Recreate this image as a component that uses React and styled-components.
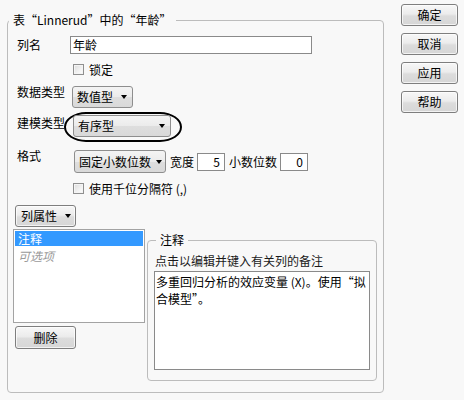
import React from "react";
import styled, { createGlobalStyle } from "styled-components";

const GlobalStyle = createGlobalStyle`
  html, body { margin: 0; padding: 0; background: #f8f8f8; }
  body {
    font-family: "Noto Sans CJK SC", "Noto Sans", sans-serif;
    font-size: 12px;
    color: #000;
  }
  * { box-sizing: border-box; }
`;

const Page = styled.div`
  display: flex;
  align-items: flex-start;
  width: 464px;
  height: 400px;
  padding: 4px 0 0 7px;
`;

const OuterSet = styled.fieldset`
  margin: 9px 0 0 0;
  padding: 0;
  min-width: 0;
  width: 377px;
  height: 380px;
  border: 1px solid #bcbcbc;
  border-radius: 4px;
`;

const Legend = styled.legend`
  margin-left: ${(p) => p.$left ?? 1}px;
  padding: 0 4px;
  line-height: 14px;
  font-size: 12px;
  white-space: nowrap;
`;

const ButtonColumn = styled.div`
  display: flex;
  flex-direction: column;
  gap: 7px;
  margin-left: 17px;
`;

const PushButton = styled.button`
  display: flex;
  align-items: center;
  justify-content: ${(p) => (p.$caret ? "space-between" : "center")};
  width: ${(p) => p.$w || 57}px;
  height: ${(p) => p.$h || 22}px;
  margin: ${(p) => p.$m || "0"};
  padding: ${(p) => (p.$caret ? "0 4px 0 5px" : "0")};
  font-family: inherit;
  font-size: 12px;
  color: #000;
  border: 1px solid #7e7e7e;
  border-radius: 3px;
  background: linear-gradient(#f7f7f7 0%, #ececec 45%, #dcdcdc 55%, #d6d6d6 100%);
  box-shadow: inset 0 0 0 1px rgba(255, 255, 255, 0.7);
  line-height: 14px;
`;

const Dropdown = styled.div`
  display: flex;
  align-items: center;
  justify-content: space-between;
  flex: none;
  width: ${(p) => p.$w}px;
  height: ${(p) => p.$h || 22}px;
  margin-left: ${(p) => p.$ml || 0}px;
  padding: 0 ${(p) => p.$pr ?? 5}px 0 4px;
  border: 1px solid #8e8e8e;
  border-radius: 3px;
  background: linear-gradient(#f4f4f4 0%, #ebebeb 50%, #dedede 51%, #d9d9d9 100%);
  line-height: 14px;
  white-space: nowrap;
`;

const Caret = styled.span`
  flex: none;
  width: 0;
  height: 0;
  border-left: 3.5px solid transparent;
  border-right: 3.5px solid transparent;
  border-top: 4px solid #000;
`;

const Oval = styled.div`
  display: flex;
  flex: none;
  margin-left: -6px;
  padding: 1px 9px 3px 7px;
  border: 2px solid #000;
  border-radius: 22px / 15px;
`;

const FieldRow = styled.div`
  display: flex;
  align-items: flex-start;
  margin-top: ${(p) => p.$gap}px;
  padding-left: 9px;
`;

const FieldLabel = styled.span`
  flex: none;
  width: 53px;
  line-height: ${(p) => p.$lh || 12}px;
  margin-top: ${(p) => p.$offset || 0}px;
  white-space: nowrap;
`;

const TextInput = styled.div`
  flex: none;
  width: ${(p) => p.$w}px;
  height: 18px;
  margin-left: ${(p) => p.$ml || 0}px;
  padding: 0 ${(p) => (p.$right ? 4 : 2)}px;
  border: 1px solid #8a8a8a;
  background: #fff;
  line-height: 16px;
  text-align: ${(p) => (p.$right ? "right" : "left")};
`;

const Inline = styled.div`
  display: flex;
  align-items: center;
  height: 23px;
`;

const InlineText = styled.span`
  margin-left: ${(p) => p.$ml || 0}px;
  white-space: nowrap;
`;

const CheckRow = styled.label`
  display: flex;
  align-items: center;
  gap: 5px;
  height: 15px;
  margin-left: 3px;
  white-space: nowrap;
`;

const CheckBox = styled.span`
  flex: none;
  width: 11px;
  height: 11px;
  border: 1px solid #8f8f8f;
  background: linear-gradient(135deg, #dcdcdc 0%, #f2f2f2 60%, #ffffff 100%);
  box-shadow: inset 0 0 0 1px #f4f4f4;
`;

const ToolRow = styled.div`
  margin-top: ${(p) => p.$gap}px;
  padding-left: ${(p) => p.$pl}px;
`;

const BottomArea = styled.div`
  display: flex;
  align-items: flex-start;
  margin-top: 2px;
  padding-left: 5px;
`;

const LeftColumn = styled.div`
  display: flex;
  flex-direction: column;
  align-items: flex-start;
`;

const ListBox = styled.div`
  width: 132px;
  height: 94px;
  padding: 1px;
  border: 1px solid #a3a3a3;
  background: #fff;
`;

const ListItem = styled.div`
  height: ${(p) => (p.$selected ? 15 : 17)}px;
  padding-left: 3px;
  line-height: ${(p) => (p.$selected ? 15 : 17)}px;
  margin-top: ${(p) => (p.$selected ? 0 : 1)}px;
  color: ${(p) => (p.$selected ? "#fff" : p.$muted ? "#9a9a9a" : "#000")};
  background: ${(p) => (p.$selected ? "#3399ff" : "transparent")};
  font-style: ${(p) => (p.$muted ? "italic" : "normal")};
`;

const InnerSet = styled.fieldset`
  margin: 4px 0 0 2px;
  padding: 0 6px;
  min-width: 0;
  width: 230px;
  height: 148px;
  border: 1px solid #bcbcbc;
  border-radius: 4px;
`;

const Hint = styled.div`
  margin-top: 7px;
  padding-left: 1px;
  line-height: 14px;
  color: #1a1a1a;
  white-space: nowrap;
`;

const NoteBox = styled.div`
  width: 216px;
  height: 99px;
  margin-top: 3px;
  padding: 1px 1px;
  border: 1px solid #8a8a8a;
  background: #fff;
  line-height: 17px;
  white-space: nowrap;
`;

export default function App() {
  return (
    <>
      <GlobalStyle />
      <Page>
        <OuterSet>
          <Legend>表“Linnerud”中的“年龄”</Legend>

          <FieldRow $gap={9}>
            <FieldLabel $lh={18}>列名</FieldLabel>
            <TextInput $w={242}>年龄</TextInput>
          </FieldRow>

          <FieldRow $gap={8}>
            <FieldLabel />
            <CheckRow>
              <CheckBox />
              锁定
            </CheckRow>
          </FieldRow>

          <FieldRow $gap={9}>
            <FieldLabel>数据类型</FieldLabel>
            <Dropdown $w={61} $ml={2}>
              数值型
              <Caret />
            </Dropdown>
          </FieldRow>

          <FieldRow $gap={4}>
            <FieldLabel $offset={5}>建模类型</FieldLabel>
            <Oval>
              <Dropdown $w={98}>
                有序型
                <Caret />
              </Dropdown>
            </Oval>
          </FieldRow>

          <FieldRow $gap={8}>
            <FieldLabel>格式</FieldLabel>
            <Inline>
              <Dropdown $w={92} $h={23} $ml={4} $pr={3}>
                固定小数位数
                <Caret />
              </Dropdown>
              <InlineText $ml={4}>宽度</InlineText>
              <TextInput $w={28} $ml={3} $right>
                5
              </TextInput>
              <InlineText $ml={4}>小数位数</InlineText>
              <TextInput $w={28} $ml={3} $right>
                0
              </TextInput>
            </Inline>
          </FieldRow>

          <FieldRow $gap={8}>
            <FieldLabel />
            <CheckRow>
              <CheckBox />
              使用千位分隔符 (,)
            </CheckRow>
          </FieldRow>

          <ToolRow $gap={9} $pl={7}>
            <PushButton $w={61} $caret>
              列属性
              <Caret />
            </PushButton>
          </ToolRow>

          <BottomArea>
            <LeftColumn>
              <ListBox>
                <ListItem $selected>注释</ListItem>
                <ListItem $muted>可选项</ListItem>
              </ListBox>
              <PushButton $w={61} $h={23} $m="3px 0 0 2px">
                删除
              </PushButton>
            </LeftColumn>
            <InnerSet>
              <Legend $left={2}>注释</Legend>
              <Hint>点击以编辑并键入有关列的备注</Hint>
              <NoteBox>
                多重回归分析的效应变量 (X)。使用“拟
                <br />
                合模型”。
              </NoteBox>
            </InnerSet>
          </BottomArea>
        </OuterSet>

        <ButtonColumn>
          <PushButton>确定</PushButton>
          <PushButton>取消</PushButton>
          <PushButton>应用</PushButton>
          <PushButton>帮助</PushButton>
        </ButtonColumn>
      </Page>
    </>
  );
}
